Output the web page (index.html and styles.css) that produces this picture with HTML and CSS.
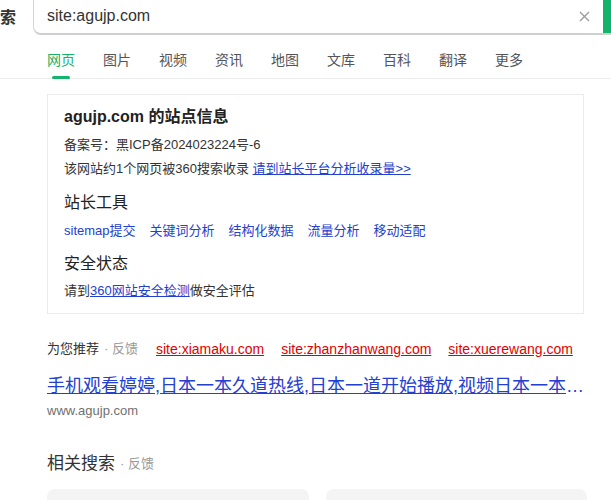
FILE: index.html
```html
<!DOCTYPE html>
<html lang="zh-CN">
<head>
  <meta charset="UTF-8" />
  <title>site:agujp.com - 360搜索</title>
  <link rel="stylesheet" href="styles.css">
</head>
<body>
  <header class="top">
    <span class="logo-text">搜索</span>
    <div class="search-box">
      <span class="query">site:agujp.com</span>
      <svg class="clear" width="11" height="11" viewBox="0 0 11 11">
        <path d="M1 1 L10 10 M10 1 L1 10" stroke="#9a9a9a" stroke-width="1.3" fill="none" />
      </svg>
      <span class="search-btn"></span>
    </div>
  </header>

  <nav class="tabs">
    <span class="tab active">网页</span>
    <span class="tab">图片</span>
    <span class="tab">视频</span>
    <span class="tab">资讯</span>
    <span class="tab">地图</span>
    <span class="tab">文库</span>
    <span class="tab">百科</span>
    <span class="tab">翻译</span>
    <span class="tab">更多</span>
  </nav>

  <main class="results">
    <section class="site-card">
      <h2 class="site-title">agujp.com 的站点信息</h2>
      <p class="line first">备案号：黑ICP备2024023224号-6</p>
      <p class="line">该网站约1个网页被360搜索收录 <a href="#" class="ul">请到站长平台分析收录量&gt;&gt;</a></p>

      <h3 class="sub-title">站长工具</h3>
      <div class="tools">
        <a href="#">sitemap提交</a>
        <a href="#">关键词分析</a>
        <a href="#">结构化数据</a>
        <a href="#">流量分析</a>
        <a href="#">移动适配</a>
      </div>

      <h3 class="sub-title safe">安全状态</h3>
      <p class="line last">请到<a href="#" class="ul">360网站安全检测</a>做安全评估</p>
    </section>

    <div class="recommend">
      <span class="rec-label">为您推荐</span>
      <span class="feedback">· 反馈</span>
      <a href="#" class="rec-link">site:xiamaku.com</a>
      <a href="#" class="rec-link">site:zhanzhanwang.com</a>
      <a href="#" class="rec-link">site:xuerewang.com</a>
    </div>

    <div class="result">
      <a href="#" class="result-title">手机观看婷婷,日本一本久道热线,日本一道开始播放,视频日本一本道高清在线观看</a>
      <div class="result-url">www.agujp.com</div>
    </div>

    <div class="related">
      <span class="related-title">相关搜索</span>
      <span class="feedback">· 反馈</span>
    </div>
    <div class="related-grid">
      <div class="related-item"></div>
      <div class="related-item"></div>
    </div>
  </main>
</body>
</html>
```

FILE: styles.css
```css
body {
  margin: 0;
  font-family: "Liberation Sans", "Noto Sans CJK SC", sans-serif;
  color: #333;
  background: #fff;
  overflow: hidden;
}

a { text-decoration: none; }

/* search bar, scrolled a little to the right */
.top {
  display: flex;
  align-items: center;
  height: 35px;
}

.logo-text {
  flex-shrink: 0;
  margin-left: -16px;
  width: 32px;
  white-space: nowrap;
  font-size: 16px;
  font-weight: bold;
  color: #333;
  line-height: 20px;
}

.search-box {
  display: flex;
  align-items: center;
  flex-shrink: 0;
  margin-left: 17px;
  margin-top: -2px;
  height: 37px;
  width: 596px;
  border: 1px solid #d4d4d4;
  border-top: none;
  border-right: none;
  border-bottom: 2px solid #cfcfcf;
  border-radius: 0 0 0 8px;
  box-sizing: border-box;
  overflow: hidden;
}

.query {
  flex: 1;
  padding-left: 13px;
  font-size: 16px;
  color: #333;
  padding-top: 1px;
}

.clear {
  margin-right: 13px;
  margin-top: 1px;
}

.search-btn {
  width: 26px;
  align-self: stretch;
  margin-bottom: -2px;
  background: #13b36b;
}

.tabs {
  display: flex;
  gap: 28px;
  margin-top: 15px;
  padding-left: 47px;
  border-bottom: 1px solid #ececec;
}

.tab {
  position: relative;
  font-size: 14px;
  line-height: 20px;
  padding-bottom: 8px;
  color: #555;
}

.tab.active { color: #13b36b; }

.tab.active::after {
  content: "";
  position: absolute;
  left: 5px;
  bottom: -1px;
  width: 18px;
  height: 3px;
  border-radius: 2px;
  background: #13b36b;
}

/* results column */
.results {
  width: 540px;
  margin-left: 47px;
}

.site-card {
  width: 537px;
  box-sizing: border-box;
  margin-top: 15px;
  padding: 10px 16px 10px;
  border: 1px solid #ececec;
}

.site-title {
  margin: 0;
  font-size: 16px;
  font-weight: bold;
  line-height: 24px;
  color: #222;
}

.line {
  margin: 0;
  font-size: 13px;
  line-height: 24px;
  color: #333;
}

.line.first { margin-top: 4px; }

.ul {
  color: #2440d0;
  text-decoration: underline;
}

.sub-title {
  margin: 10px 0 0;
  font-size: 16px;
  font-weight: normal;
  line-height: 24px;
  color: #222;
}

.sub-title.safe { margin-top: 9px; }

.tools {
  display: flex;
  gap: 14px;
  margin-top: 4px;
  font-size: 13px;
  line-height: 24px;
}

.tools a { color: #2440d0; }

.line.last { margin-top: 3px; }

.recommend {
  display: flex;
  align-items: center;
  margin-top: 25px;
  font-size: 13px;
  line-height: 20px;
}

.feedback {
  color: #999;
  font-size: 13px;
  margin-left: 5px;
}

.rec-link {
  margin-left: 17px;
  font-size: 14px;
  color: #e00000;
  text-decoration: underline;
}

.recommend .feedback + .rec-link { margin-left: 18px; }

.result { margin-top: 14px; }

.result-title {
  display: block;
  width: 537px;
  font-size: 18px;
  line-height: 26px;
  color: #2440d0;
  text-decoration: underline;
  white-space: nowrap;
  overflow: hidden;
  text-overflow: ellipsis;
}

.result-url {
  margin-top: 2px;
  font-size: 13px;
  line-height: 20px;
  color: #707070;
}

.related {
  display: flex;
  align-items: center;
  margin-top: 31px;
  line-height: 24px;
}

.related-title {
  font-size: 17px;
  color: #333;
}

.related-grid {
  display: grid;
  grid-template-columns: 1fr 1fr;
  gap: 17px;
  margin-top: 13px;
}

.related-item {
  height: 44px;
  border-radius: 8px;
  background: #f4f4f4;
}
```
